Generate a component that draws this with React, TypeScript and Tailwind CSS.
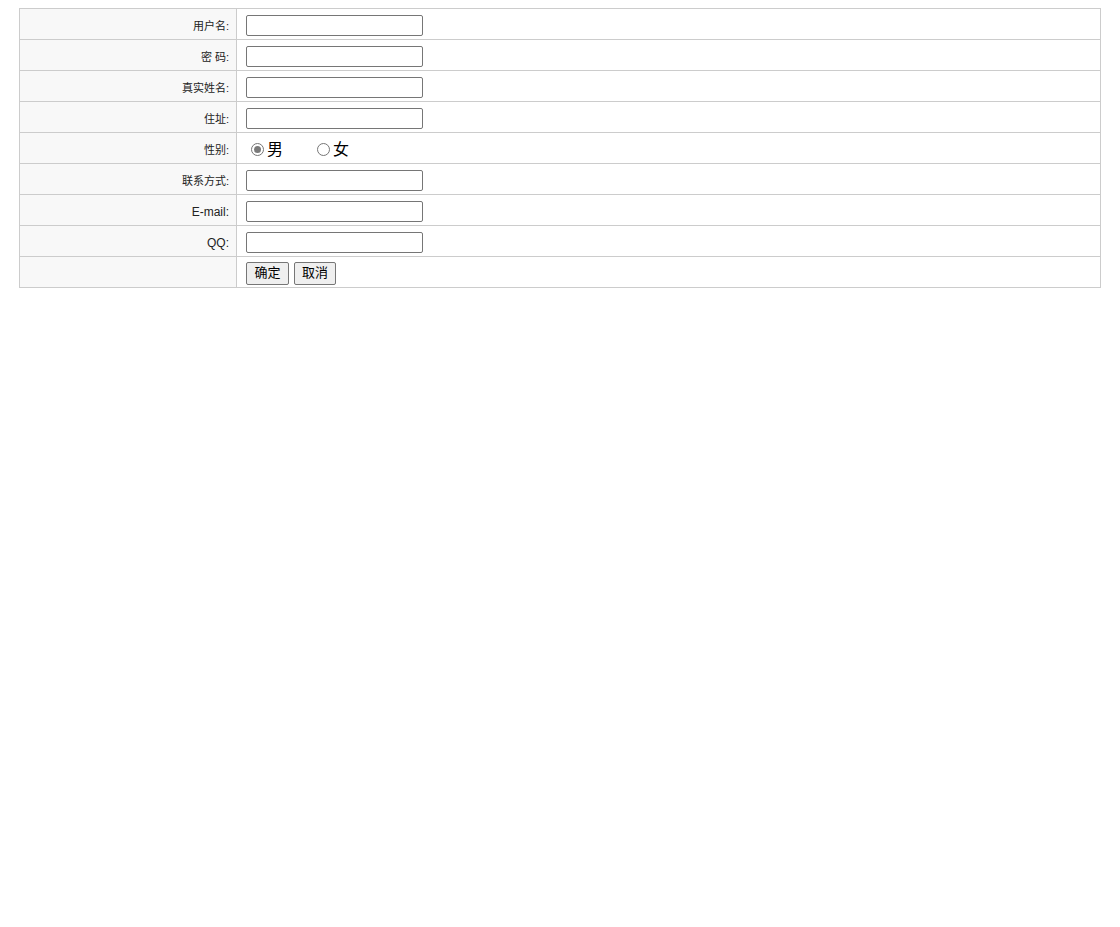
const FONT = "font-['Liberation_Sans','Noto_Sans_CJK_SC',sans-serif]"

const ROWS: { label: string; kind: 'text' | 'radio' | 'buttons'; latin?: boolean }[] = [
  { label: '用户名:', kind: 'text' },
  { label: '密 码:', kind: 'text' },
  { label: '真实姓名:', kind: 'text' },
  { label: '住址:', kind: 'text' },
  { label: '性别:', kind: 'radio' },
  { label: '联系方式:', kind: 'text' },
  { label: 'E-mail:', kind: 'text', latin: true },
  { label: 'QQ:', kind: 'text', latin: true },
  { label: '', kind: 'buttons' },
]

function Radio({ checked }: { checked?: boolean }) {
  return (
    <span className="ml-[5px] mr-[3px] inline-flex h-[13px] w-[13px] items-center justify-center rounded-full border border-[#767676] bg-white">
      {checked && <span className="h-[7px] w-[7px] rounded-full bg-[#7a7a7a]" />}
    </span>
  )
}

export default function App() {
  return (
    <div className={`min-h-[927px] bg-white pt-[8px] pl-[19px] ${FONT}`}>
      <table className="w-[1082px] border-collapse">
        <tbody>
          {ROWS.map((r, i) => (
            <tr key={i} className="h-[31px]">
              <td
                className={`w-[217px] border border-[#cccccc] bg-[#f8f8f8] p-0 pt-[4px] pr-[7px] text-right align-middle text-[#222] ${
                  r.latin ? 'text-[12px]' : 'text-[11px]'
                }`}
              >
                {r.label}
              </td>
              <td className="border border-[#cccccc] bg-white p-0 pl-[9px] align-middle">
                {r.kind === 'text' && (
                  <input
                    type="text"
                    className="mt-[3px] block h-[21px] w-[177px] rounded-[2px] border border-[#767676] bg-white px-1 text-[13px] outline-none"
                  />
                )}
                {r.kind === 'radio' && (
                  <div className="mt-[3px] flex items-center text-[16px] text-black">
                    <Radio checked />
                    <span>男</span>
                    <span className="w-[29px]" />
                    <Radio />
                    <span>女</span>
                  </div>
                )}
                {r.kind === 'buttons' && (
                  <div className="mt-[2px] flex gap-[5px]">
                    <button className="h-[23px] w-[43px] rounded-[2px] border border-[#767676] bg-[#efefef] text-[13px] text-black">确定</button>
                    <button className="h-[23px] w-[42px] rounded-[2px] border border-[#767676] bg-[#efefef] text-[13px] text-black">取消</button>
                  </div>
                )}
              </td>
            </tr>
          ))}
        </tbody>
      </table>
    </div>
  )
}
